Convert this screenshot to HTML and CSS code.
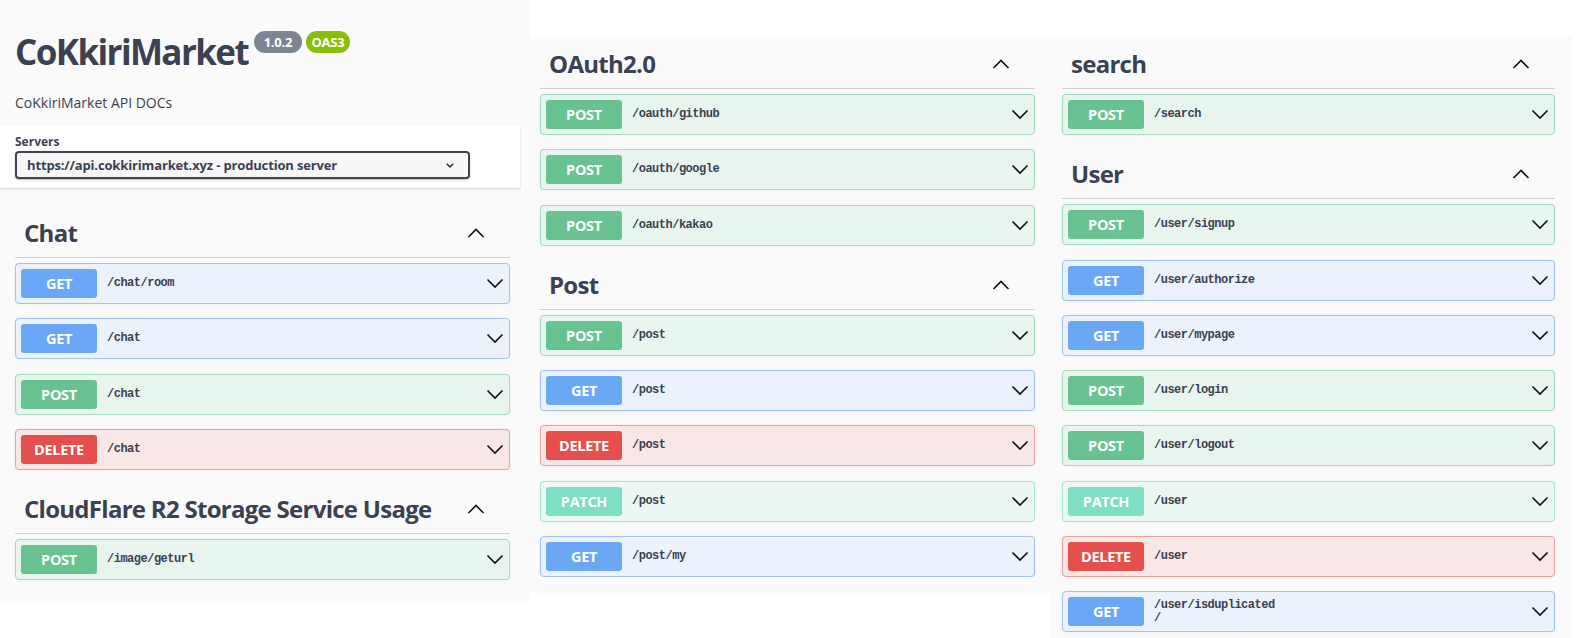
FILE: index.html
```html
<!DOCTYPE html>
<html lang="en">
<head>
<meta charset="utf-8">
<title>CoKkiriMarket</title>
<link rel="stylesheet" href="styles.css">
</head>
<body>
<div class="canvas">
  <section class="panel panel-left">
    <div class="info">
      <h1 class="title">CoKkiriMarket<span class="badges"><span class="badge ver">1.0.2</span><span class="badge oas">OAS3</span></span></h1>
      <p class="desc">CoKkiriMarket API DOCs</p>
    </div>
    <div class="schemes">
      <div class="servers-label">Servers</div>
      <div class="select">
        <span>https://api.cokkirimarket.xyz - production server</span>
        <svg class="sel-arrow" width="8" height="5" viewBox="0 0 8 5"><polyline points="0.8,0.8 4,4 7.2,0.8" fill="none" stroke="#222" stroke-width="1.4"/></svg>
      </div>
    </div>
    <div class="tags">
      <div class="tag-section">
        <h3 class="tag"><span>Chat</span><svg class="up" width="20" height="12" viewBox="0 0 20 12"><polyline points="2.5,10 10,2.5 17.5,10" fill="none" stroke="#111" stroke-width="1.6"/></svg></h3>
        <div class="op get"><span class="method">GET</span><span class="path">/chat/room</span><svg class="down" width="18" height="11" viewBox="0 0 18 11"><polyline points="1.5,1.5 9,9 16.5,1.5" fill="none" stroke="#111" stroke-width="1.6"/></svg></div>
        <div class="op get"><span class="method">GET</span><span class="path">/chat</span><svg class="down" width="18" height="11" viewBox="0 0 18 11"><polyline points="1.5,1.5 9,9 16.5,1.5" fill="none" stroke="#111" stroke-width="1.6"/></svg></div>
        <div class="op post"><span class="method">POST</span><span class="path">/chat</span><svg class="down" width="18" height="11" viewBox="0 0 18 11"><polyline points="1.5,1.5 9,9 16.5,1.5" fill="none" stroke="#111" stroke-width="1.6"/></svg></div>
        <div class="op delete"><span class="method">DELETE</span><span class="path">/chat</span><svg class="down" width="18" height="11" viewBox="0 0 18 11"><polyline points="1.5,1.5 9,9 16.5,1.5" fill="none" stroke="#111" stroke-width="1.6"/></svg></div>
      </div>
      <div class="tag-section">
        <h3 class="tag"><span>CloudFlare R2 Storage Service Usage</span><svg class="up" width="20" height="12" viewBox="0 0 20 12"><polyline points="2.5,10 10,2.5 17.5,10" fill="none" stroke="#111" stroke-width="1.6"/></svg></h3>
        <div class="op post"><span class="method">POST</span><span class="path">/image/geturl</span><svg class="down" width="18" height="11" viewBox="0 0 18 11"><polyline points="1.5,1.5 9,9 16.5,1.5" fill="none" stroke="#111" stroke-width="1.6"/></svg></div>
      </div>
    </div>
  </section>

  <section class="panel panel-mid">
    <div class="tag-section">
      <h3 class="tag"><span>OAuth2.0</span><svg class="up" width="20" height="12" viewBox="0 0 20 12"><polyline points="2.5,10 10,2.5 17.5,10" fill="none" stroke="#111" stroke-width="1.6"/></svg></h3>
      <div class="op post"><span class="method">POST</span><span class="path">/oauth/github</span><svg class="down" width="18" height="11" viewBox="0 0 18 11"><polyline points="1.5,1.5 9,9 16.5,1.5" fill="none" stroke="#111" stroke-width="1.6"/></svg></div>
      <div class="op post"><span class="method">POST</span><span class="path">/oauth/google</span><svg class="down" width="18" height="11" viewBox="0 0 18 11"><polyline points="1.5,1.5 9,9 16.5,1.5" fill="none" stroke="#111" stroke-width="1.6"/></svg></div>
      <div class="op post"><span class="method">POST</span><span class="path">/oauth/kakao</span><svg class="down" width="18" height="11" viewBox="0 0 18 11"><polyline points="1.5,1.5 9,9 16.5,1.5" fill="none" stroke="#111" stroke-width="1.6"/></svg></div>
    </div>
    <div class="tag-section">
      <h3 class="tag"><span>Post</span><svg class="up" width="20" height="12" viewBox="0 0 20 12"><polyline points="2.5,10 10,2.5 17.5,10" fill="none" stroke="#111" stroke-width="1.6"/></svg></h3>
      <div class="op post"><span class="method">POST</span><span class="path">/post</span><svg class="down" width="18" height="11" viewBox="0 0 18 11"><polyline points="1.5,1.5 9,9 16.5,1.5" fill="none" stroke="#111" stroke-width="1.6"/></svg></div>
      <div class="op get"><span class="method">GET</span><span class="path">/post</span><svg class="down" width="18" height="11" viewBox="0 0 18 11"><polyline points="1.5,1.5 9,9 16.5,1.5" fill="none" stroke="#111" stroke-width="1.6"/></svg></div>
      <div class="op delete"><span class="method">DELETE</span><span class="path">/post</span><svg class="down" width="18" height="11" viewBox="0 0 18 11"><polyline points="1.5,1.5 9,9 16.5,1.5" fill="none" stroke="#111" stroke-width="1.6"/></svg></div>
      <div class="op patch"><span class="method">PATCH</span><span class="path">/post</span><svg class="down" width="18" height="11" viewBox="0 0 18 11"><polyline points="1.5,1.5 9,9 16.5,1.5" fill="none" stroke="#111" stroke-width="1.6"/></svg></div>
      <div class="op get"><span class="method">GET</span><span class="path">/post/my</span><svg class="down" width="18" height="11" viewBox="0 0 18 11"><polyline points="1.5,1.5 9,9 16.5,1.5" fill="none" stroke="#111" stroke-width="1.6"/></svg></div>
    </div>
  </section>

  <section class="panel panel-right">
    <div class="tag-section">
      <h3 class="tag"><span>search</span><svg class="up" width="20" height="12" viewBox="0 0 20 12"><polyline points="2.5,10 10,2.5 17.5,10" fill="none" stroke="#111" stroke-width="1.6"/></svg></h3>
      <div class="op post"><span class="method">POST</span><span class="path">/search</span><svg class="down" width="18" height="11" viewBox="0 0 18 11"><polyline points="1.5,1.5 9,9 16.5,1.5" fill="none" stroke="#111" stroke-width="1.6"/></svg></div>
    </div>
    <div class="tag-section">
      <h3 class="tag"><span>User</span><svg class="up" width="20" height="12" viewBox="0 0 20 12"><polyline points="2.5,10 10,2.5 17.5,10" fill="none" stroke="#111" stroke-width="1.6"/></svg></h3>
      <div class="op post"><span class="method">POST</span><span class="path">/user/signup</span><svg class="down" width="18" height="11" viewBox="0 0 18 11"><polyline points="1.5,1.5 9,9 16.5,1.5" fill="none" stroke="#111" stroke-width="1.6"/></svg></div>
      <div class="op get"><span class="method">GET</span><span class="path">/user/authorize</span><svg class="down" width="18" height="11" viewBox="0 0 18 11"><polyline points="1.5,1.5 9,9 16.5,1.5" fill="none" stroke="#111" stroke-width="1.6"/></svg></div>
      <div class="op get"><span class="method">GET</span><span class="path">/user/mypage</span><svg class="down" width="18" height="11" viewBox="0 0 18 11"><polyline points="1.5,1.5 9,9 16.5,1.5" fill="none" stroke="#111" stroke-width="1.6"/></svg></div>
      <div class="op post"><span class="method">POST</span><span class="path">/user/login</span><svg class="down" width="18" height="11" viewBox="0 0 18 11"><polyline points="1.5,1.5 9,9 16.5,1.5" fill="none" stroke="#111" stroke-width="1.6"/></svg></div>
      <div class="op post"><span class="method">POST</span><span class="path">/user/logout</span><svg class="down" width="18" height="11" viewBox="0 0 18 11"><polyline points="1.5,1.5 9,9 16.5,1.5" fill="none" stroke="#111" stroke-width="1.6"/></svg></div>
      <div class="op patch"><span class="method">PATCH</span><span class="path">/user</span><svg class="down" width="18" height="11" viewBox="0 0 18 11"><polyline points="1.5,1.5 9,9 16.5,1.5" fill="none" stroke="#111" stroke-width="1.6"/></svg></div>
      <div class="op delete"><span class="method">DELETE</span><span class="path">/user</span><svg class="down" width="18" height="11" viewBox="0 0 18 11"><polyline points="1.5,1.5 9,9 16.5,1.5" fill="none" stroke="#111" stroke-width="1.6"/></svg></div>
      <div class="op get"><span class="method">GET</span><span class="path">/user/isduplicated<br>/</span><svg class="down" width="18" height="11" viewBox="0 0 18 11"><polyline points="1.5,1.5 9,9 16.5,1.5" fill="none" stroke="#111" stroke-width="1.6"/></svg></div>
    </div>
  </section>
</div>
</body>
</html>
```

FILE: styles.css
```css
* { box-sizing: border-box; }

html, body {
  margin: 0;
  padding: 0;
  background: #ffffff;
}

body {
  font-family: "Open Sans", "Noto Sans", sans-serif;
  color: #3b4151;
  width: 1576px;
  height: 638px;
  overflow: hidden;
}

.canvas {
  display: flex;
  align-items: flex-start;
}

.panel {
  background: #fafafa;
}

.panel-left {
  width: 530px;
  height: 603px;
  padding: 0 20px 0 0;
}

.panel-mid {
  width: 520px;
  height: 556px;
  margin-top: 37px;
  padding: 2px 15px 0 10px;
}

.panel-right {
  width: 522px;
  height: 601px;
  margin-top: 37px;
  padding: 2px 17px 0 12px;
}

/* ---------- info ---------- */
.info {
  padding: 30px 0 0 15px;
}

.title {
  margin: 0;
  font-size: 35px;
  line-height: 44px;
  font-weight: 700;
  letter-spacing: -1.6px;
  color: #3b4151;
  display: flex;
  align-items: flex-start;
}

.badges {
  display: flex;
  gap: 4px;
  margin-left: 6px;
  margin-top: 1px;
  letter-spacing: 0;
}

.badge {
  height: 22px;
  border-radius: 11px;
  color: #fff;
  font-size: 13px;
  font-weight: 700;
  line-height: 22px;
  letter-spacing: -0.2px;
  text-align: center;
}

.badge.ver { background: #7d8492; width: 48px; }
.badge.oas { background: #89bf04; width: 44px; }

.desc {
  margin: 19px 0 0;
  font-size: 14px;
  line-height: 20px;
  color: #3b4151;
}

/* ---------- servers ---------- */
.schemes {
  margin-top: 12px;
  width: 520px;
  height: 63px;
  background: #ffffff;
  box-shadow: 0 1px 2px 0 rgba(0, 0, 0, 0.15);
  padding: 9px 0 0 15px;
}

.servers-label {
  font-size: 12px;
  line-height: 16px;
  font-weight: 700;
  color: #3b4151;
}

.select {
  margin-top: 1px;
  width: 455px;
  height: 28px;
  border: 2px solid #41444e;
  border-radius: 4px;
  background: #f7f7f7;
  box-shadow: 0 1px 2px 0 rgba(0, 0, 0, 0.25);
  display: flex;
  align-items: center;
  justify-content: space-between;
  padding: 0 14px 0 10px;
  font-size: 13px;
  font-weight: 700;
  color: #3b4151;
  letter-spacing: -0.15px;
}

.sel-arrow { display: block; }

/* ---------- tags ---------- */
.tags {
  margin-top: 20px;
  padding-left: 15px;
}

.tag {
  margin: 0 0 5px;
  height: 50px;
  padding: 10px 24px 9px 9px;
  border-bottom: 1px solid rgba(59, 65, 81, 0.22);
  display: flex;
  align-items: center;
  justify-content: space-between;
  font-size: 24px;
  line-height: 30px;
  font-weight: 700;
  letter-spacing: -0.72px;
  color: #3b4151;
}

.tag .up { display: block; }

/* ---------- operations ---------- */
.op {
  height: 41px;
  margin-bottom: 14.3px;
  border: 1px solid;
  border-radius: 4px;
  padding: 0 5px;
  display: flex;
  align-items: center;
  box-shadow: 0 0 2px rgba(0, 0, 0, 0.08);
}

.method {
  flex: none;
  width: 76px;
  height: 29px;
  border-radius: 3px;
  display: flex;
  align-items: center;
  justify-content: center;
  color: #fff;
  font-size: 14.5px;
  font-weight: 700;
  letter-spacing: -0.3px;
}

.path {
  flex: 1;
  margin-left: 10px;
  font-family: "Liberation Mono", "DejaVu Sans Mono", monospace;
  font-size: 12px;
  line-height: 13px;
  font-weight: 700;
  letter-spacing: -0.5px;
  color: #3b4151;
}

.down {
  flex: none;
  display: block;
}

.op.get { background: #ebf2fb; border-color: #a2c3ee; }
.op.get .method { background: #6aa8f6; }

.op.post { background: #e8f5ef; border-color: #a4dbbd; }
.op.post .method { background: #68c391; }

.op.delete { background: #f9e6e6; border-color: #e8a2a2; }
.op.delete .method { background: #e5504c; }

.op.patch { background: #eaf7f2; border-color: #a8e6d5; }
.op.patch .method { background: #7ddfc3; }
```
